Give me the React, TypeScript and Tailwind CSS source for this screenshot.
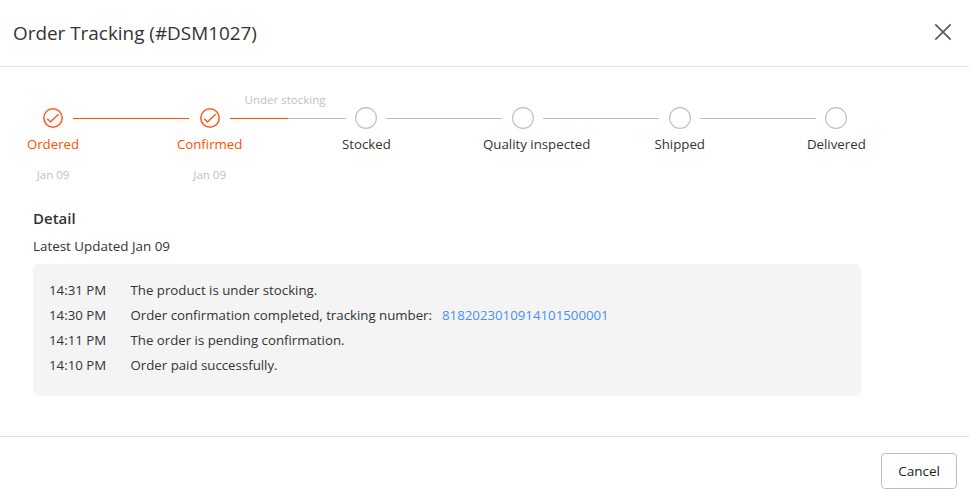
import { Fragment } from "react";

type Step = {
  label: string;
  done?: boolean;
  date?: string;
};

type LogItem = {
  time: string;
  text: string;
  trackingNo?: string;
};

const STEPS: Step[] = [
  { label: "Ordered", done: true, date: "Jan 09" },
  { label: "Confirmed", done: true, date: "Jan 09" },
  { label: "Stocked" },
  { label: "Quality inspected" },
  { label: "Shipped" },
  { label: "Delivered" },
];

// progress (%) of the line that follows each step
const LINES = [
  { progress: 100, note: "" },
  { progress: 50, note: "Under stocking" },
  { progress: 0, note: "" },
  { progress: 0, note: "" },
  { progress: 0, note: "" },
];

const LOGS: LogItem[] = [
  { time: "14:31 PM", text: "The product is under stocking." },
  {
    time: "14:30 PM",
    text: "Order confirmation completed, tracking number:",
    trackingNo: "8182023010914101500001",
  },
  { time: "14:11 PM", text: "The order is pending confirmation." },
  { time: "14:10 PM", text: "Order paid successfully." },
];

function StepIcon({ done }: { done?: boolean }) {
  if (!done) {
    return (
      <svg className="h-[22px] w-[22px] shrink-0" viewBox="0 0 22 22" fill="none">
        <circle cx="11" cy="11" r="10.4" stroke="#bfbfbf" strokeWidth="1.1" />
      </svg>
    );
  }
  return (
    <svg className="h-[22px] w-[22px] shrink-0" viewBox="0 0 22 22" fill="none" stroke="#fe5a1d">
      <circle cx="11" cy="11" r="9.2" strokeWidth="1.5" />
      <path d="M5.3 11.8 8.4 15 16.6 7.2" strokeWidth="1.5" />
    </svg>
  );
}

function StepLabel({ label, done }: Step) {
  // long labels start at the fixed 80px label box instead of being centered
  return (
    <div className="mt-[5px] flex w-20 justify-center-safe text-[13.25px] leading-5">
      <span className={done ? "text-[#fe5000]" : "text-[#333333]"}>{label}</span>
    </div>
  );
}

function Stepper() {
  return (
    <div className="flex w-[823.35px]">
      {STEPS.map((step, i) => (
        <Fragment key={step.label}>
          <div className="flex w-10 flex-col items-center pt-4 whitespace-nowrap">
            <StepIcon done={step.done} />
            <StepLabel {...step} />
            <span className="mt-[13px] h-4 text-[11.5px] leading-4 text-[#bfbfbf]">
              {step.date}
            </span>
          </div>
          {LINES[i] && (
            <div className="flex-1">
              <div className="flex h-[27px] justify-center pt-px pr-1.5 text-[11.5px] leading-4 whitespace-nowrap text-[#bfbfbf]">
                {LINES[i].note}
              </div>
              <div className="h-px w-[116px] bg-[#bfbfbf]">
                <div className="h-px bg-[#fe5000]" style={{ width: `${LINES[i].progress}%` }} />
              </div>
            </div>
          )}
        </Fragment>
      ))}
    </div>
  );
}

export default function App() {
  return (
    <div className="h-[502px] w-[979px] bg-white font-['Open_Sans','Noto_Sans',sans-serif] text-[#333333]">
      <div className="flex h-full w-[969px] flex-col" role="dialog">
        <header className="flex h-[67px] items-center justify-between border-b border-[#e1e1e1] pr-[17px] pl-[13px]">
          <h2 className="text-[18.9px] leading-7">Order Tracking (#DSM1027)</h2>
          <button type="button" aria-label="Close" className="mb-0.5 cursor-pointer">
            <svg className="h-[18px] w-[18px]" viewBox="0 0 18 18" fill="none">
              <path d="M1.3 1.3 16.7 16.7M16.7 1.3 1.3 16.7" stroke="#5c5f62" strokeWidth="1.8" />
            </svg>
          </button>
        </header>

        <main className="flex-1 pt-6 pl-[33px]">
          <Stepper />

          <h3 className="mt-[25px] text-[15px] leading-5 font-semibold">Detail</h3>
          <p className="mt-2 text-[13.4px] leading-5">Latest Updated Jan 09</p>

          <ul className="mt-2 h-[132px] w-[828px] rounded-md bg-[#f4f4f4] px-4 pt-3.5 text-[13.25px] leading-[25px]">
            {LOGS.map((log) => (
              <li key={log.time} className="flex">
                <span className="w-[81.5px]">{log.time}</span>
                <span>{log.text}</span>
                {log.trackingNo && (
                  <a className="ml-2.5 cursor-pointer text-[#458fff]">{log.trackingNo}</a>
                )}
              </li>
            ))}
          </ul>
        </main>

        <footer className="flex h-[66px] items-start justify-end border-t border-[#e1e1e1] pt-4 pr-3">
          <button
            type="button"
            className="h-9 w-[76px] cursor-pointer rounded border border-[#babfc3] text-[13.5px] font-medium text-[#202223]">
            Cancel
          </button>
        </footer>
      </div>
    </div>
  );
}
